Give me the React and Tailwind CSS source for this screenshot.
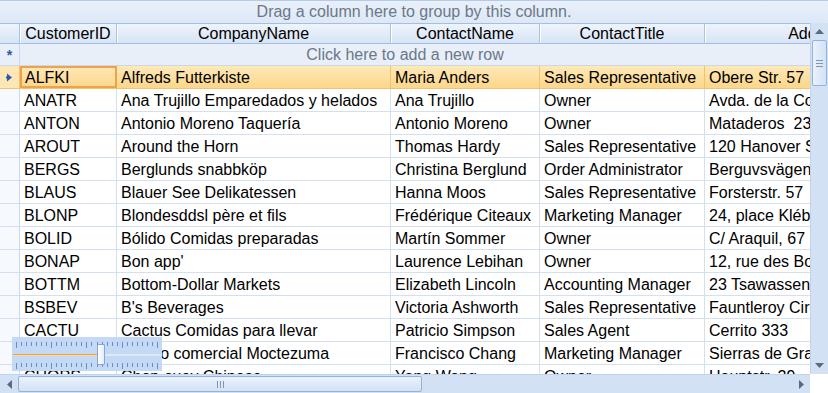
import React from "react";

const rows = [
  ["ALFKI", "Alfreds Futterkiste", "Maria Anders", "Sales Representative", "Obere Str. 57"],
  ["ANATR", "Ana Trujillo Emparedados y helados", "Ana Trujillo", "Owner", "Avda. de la Constitución 2222"],
  ["ANTON", "Antonio Moreno Taquería", "Antonio Moreno", "Owner", "Mataderos  2312"],
  ["AROUT", "Around the Horn", "Thomas Hardy", "Sales Representative", "120 Hanover Sq."],
  ["BERGS", "Berglunds snabbköp", "Christina Berglund", "Order Administrator", "Berguvsvägen  8"],
  ["BLAUS", "Blauer See Delikatessen", "Hanna Moos", "Sales Representative", "Forsterstr. 57"],
  ["BLONP", "Blondesddsl père et fils", "Frédérique Citeaux", "Marketing Manager", "24, place Kléber"],
  ["BOLID", "Bólido Comidas preparadas", "Martín Sommer", "Owner", "C/ Araquil, 67"],
  ["BONAP", "Bon app'", "Laurence Lebihan", "Owner", "12, rue des Bouchers"],
  ["BOTTM", "Bottom-Dollar Markets", "Elizabeth Lincoln", "Accounting Manager", "23 Tsawassen Blvd."],
  ["BSBEV", "B's Beverages", "Victoria Ashworth", "Sales Representative", "Fauntleroy Circus"],
  ["CACTU", "Cactus Comidas para llevar", "Patricio Simpson", "Sales Agent", "Cerrito 333"],
  ["CENTC", "Centro comercial Moctezuma", "Francisco Chang", "Marketing Manager", "Sierras de Granada 9993"],
  ["CHOPS", "Chop-suey Chinese", "Yang Wang", "Owner", "Hauptstr. 29"],
];

const widths = ["w-[97px]", "w-[274px]", "w-[149px]", "w-[165px]", "w-[226px]"];
const titles = ["CustomerID", "CompanyName", "ContactName", "ContactTitle", "Address"];

function Ticks() {
  const ticks = Array.from({ length: 29 });
  return (
    <div className="flex justify-between px-[4px] items-start h-[6px]">
      {ticks.map((_, i) => (
        <div key={i} className={`w-px bg-[#6d8fbe] ${i % 7 === 0 ? "h-[6px]" : "h-[4px]"}`} />
      ))}
    </div>
  );
}

export default function App() {
  return (
    <div className="relative w-[828px] h-[393px] overflow-hidden bg-white text-[16px] text-black font-[family-name:Liberation_Sans,Arial,sans-serif] leading-none">
      {/* Group panel */}
      <div className="h-[23px] flex items-center justify-center bg-gradient-to-b from-[#e9f0fa] to-[#dde8f6] border-t border-[#b3cbea] text-[#6b7888]">
        Drag a column here to group by this column.
      </div>

      <div className="flex h-[351px]">
        {/* Grid area */}
        <div className="w-[810px] overflow-hidden">
          <div className="w-[940px]">
            {/* Header */}
            <div className="flex h-[21px] border-t border-b border-[#a3bfe4] bg-gradient-to-b from-[#eef4fc] to-[#d7e4f5]">
              <div className="w-[20px] shrink-0 border-r border-[#a9c3e6]" />
              {titles.map((t, i) => (
                <div
                  key={t}
                  className={`${widths[i]} shrink-0 border-r border-[#a9c3e6] shadow-[inset_1px_0_0_#ffffff] flex items-center justify-center whitespace-nowrap overflow-hidden`}
                >
                  {t}
                </div>
              ))}
            </div>

            {/* New row */}
            <div className="flex h-[22px] bg-[#e8eff9] border-b border-[#c7d8ef]">
              <div className="w-[20px] shrink-0 border-r border-[#c7d8ef] flex items-center justify-center text-[#2d5aa8] text-[14px] font-bold">
                *
              </div>
              <div className="w-[770px] flex items-center justify-center text-[#6b7888]">
                Click here to add a new row
              </div>
            </div>

            {/* Data rows */}
            {rows.map((r, ri) => {
              const sel = ri === 0;
              return (
                <div
                  key={r[0]}
                  className={`flex h-[23px] border-b ${sel ? "border-[#f3c26e] bg-gradient-to-b from-[#fee9b8] to-[#fcd68a]" : "border-[#d3e0f1]"}`}
                >
                  <div
                    className={`w-[20px] shrink-0 border-r flex items-center justify-center ${sel ? "border-[#f3c26e] bg-[#fde7b6]" : "border-[#c7d8ef] bg-[#f6f9fd]"}`}
                  >
                    {sel && (
                      <svg width="7" height="9" viewBox="0 0 7 9">
                        <path d="M1 0.5 L6 4.5 L1 8.5 Z" fill="#2a5bb0" />
                        <rect x="0" y="3.5" width="3" height="2" fill="#2a5bb0" />
                      </svg>
                    )}
                  </div>
                  {r.map((c, ci) => (
                    <div
                      key={ci}
                      className={`${widths[ci]} shrink-0 flex items-center pt-[2px] whitespace-pre overflow-hidden ${
                        sel && ci === 0
                          ? "border-2 border-[#f0a24a] pl-[3px]"
                          : sel
                          ? "border-r border-[#f3c26e] pl-[4px]"
                          : "border-r border-[#d3e0f1] pl-[4px]"
                      }`}
                    >
                      {c}
                    </div>
                  ))}
                </div>
              );
            })}
          </div>
        </div>

        {/* Vertical scrollbar */}
        <div className="w-[18px] flex flex-col bg-[#d2e1f4] border-l border-[#c0d4ee]">
          <div className="h-[17px] flex items-center justify-center">
            <svg width="9" height="5" viewBox="0 0 9 5">
              <path d="M0 5 L4.5 0 L9 5 Z" fill="#5a6b80" />
            </svg>
          </div>
          <div className="h-[46px] mx-[1px] rounded-[2px] border border-[#93b3dd] bg-gradient-to-r from-[#eaf2fc] to-[#d3e2f5] flex items-center justify-center">
            <div className="flex flex-col gap-[2px]">
              <div className="w-[7px] h-px bg-[#7d96b8]" />
              <div className="w-[7px] h-px bg-[#7d96b8]" />
              <div className="w-[7px] h-px bg-[#7d96b8]" />
            </div>
          </div>
          <div className="flex-1" />
          <div className="h-[17px] flex items-center justify-center">
            <svg width="9" height="5" viewBox="0 0 9 5">
              <path d="M0 0 L9 0 L4.5 5 Z" fill="#5a6b80" />
            </svg>
          </div>
        </div>
      </div>

      {/* Horizontal scrollbar */}
      <div className="flex h-[19px]">
        <div className="w-[810px] flex bg-[#d2e1f4] border-t border-[#c0d4ee] items-stretch">
          <div className="w-[18px] flex items-center justify-center">
            <svg width="5" height="9" viewBox="0 0 5 9">
              <path d="M5 0 L5 9 L0 4.5 Z" fill="#5a6b80" />
            </svg>
          </div>
          <div className="w-[404px] my-[1px] rounded-[2px] border border-[#93b3dd] bg-gradient-to-b from-[#eaf2fc] to-[#d3e2f5] flex items-center justify-center">
            <div className="flex gap-[2px]">
              <div className="w-px h-[7px] bg-[#7d96b8]" />
              <div className="w-px h-[7px] bg-[#7d96b8]" />
              <div className="w-px h-[7px] bg-[#7d96b8]" />
            </div>
          </div>
          <div className="flex-1" />
          <div className="w-[18px] flex items-center justify-center">
            <svg width="5" height="9" viewBox="0 0 5 9">
              <path d="M0 0 L5 4.5 L0 9 Z" fill="#5a6b80" />
            </svg>
          </div>
        </div>
        <div className="w-[18px] bg-white" />
      </div>

      {/* Zoom slider overlay */}
      <div className="absolute left-[12px] top-[337px] w-[150px] h-[34px] bg-[#c3d9f6] pt-[5px]">
        <Ticks />
        <div className="mt-[6px] flex h-[3px] px-[1px]">
          <div className="w-[85px] h-[2px] bg-[#f3a33a] border-b border-[#fbd9a6]" />
          <div className="flex-1 h-[2px] bg-[#dfe9f6]" />
        </div>
        <div className="mt-[6px]">
          <Ticks />
        </div>
        <div className="absolute left-[85px] top-[7px] w-[8px] h-[21px] rounded-[1px] border border-[#88a8d4] bg-gradient-to-r from-[#ffffff] to-[#e3ecf8]" />
      </div>
    </div>
  );
}
